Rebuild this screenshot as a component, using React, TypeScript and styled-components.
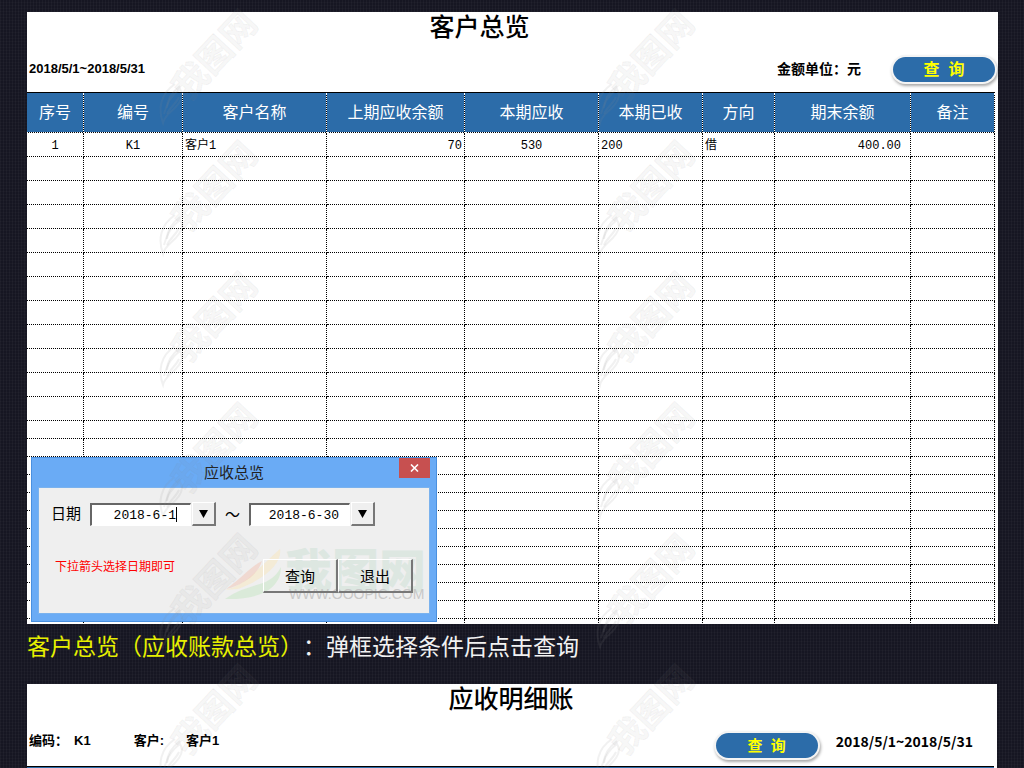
import React from 'react';
import styled, { createGlobalStyle } from 'styled-components';

const GlobalStyle = createGlobalStyle`
  *, *::before, *::after { box-sizing: border-box; }
  body {
    margin: 0;
    background: #161622;
    color: #000;
    font-family: "Liberation Sans", "Noto Sans CJK SC", sans-serif;
    font-size: 12px;
    text-spacing-trim: space-all;
  }
  button, input { font: inherit; margin: 0; }
`;

const Page = styled.main`
  position: relative;
  height: 100vh;
  overflow: hidden;
  padding: 12px 26px 0 27px;
  background-color: #161622;
  background-image:
    repeating-linear-gradient(90deg, rgba(255, 255, 255, 0.03) 0 1px, transparent 1px 3px),
    repeating-linear-gradient(0deg, rgba(255, 255, 255, 0.02) 0 1px, transparent 1px 3px);
`;

const Sheet = styled.section<{ $inset?: number }>`
  position: relative;
  margin-right: ${p => p.$inset ?? 0}px;
  background: #fff;
`;

const OverviewSheet = styled(Sheet)`
  height: 612px;
  overflow: hidden;
`;

const SheetTitle = styled.h1<{ $shift: number }>`
  margin: 0;
  padding-right: ${p => p.$shift}px;
  height: 32px;
  text-align: center;
  font-family: "Liberation Serif", "Noto Sans CJK SC", serif;
  font-size: 25px;
  font-weight: 500;
  line-height: 32px;
`;

const InfoBar = styled.div<{ $pad: string; $height: number }>`
  display: flex;
  align-items: center;
  height: ${p => p.$height}px;
  padding: ${p => p.$pad};
`;

const Label = styled.span<{ $size?: number; $gap?: number; $wide?: boolean }>`
  margin-right: ${p => p.$gap ?? 0}px;
  font-family: ${p => (p.$wide ? '' : '"Liberation Sans", ')}"Noto Sans CJK SC", sans-serif;
  font-size: ${p => p.$size ?? 13}px;
  font-weight: 700;
  line-height: 18px;
  white-space: nowrap;
`;

const Spacer = styled.span`
  flex: 1;
`;

const QueryPill = styled.button<{ $size: number; $drop?: number; $gap?: number }>`
  width: 102px;
  height: 25px;
  margin-top: ${p => p.$drop ?? 0}px;
  margin-right: ${p => p.$gap ?? 0}px;
  padding: 0;
  border: 0;
  border-radius: 13px;
  background: #2c6ca9;
  box-shadow: 0 0 0 2px #f4f4f4, 1px 2px 3px 2px #aaa;
  color: #ff0;
  font-size: ${p => p.$size}px;
  font-weight: 700;
  line-height: 25px;
`;

const Table = styled.table`
  width: calc(100% - 3px);
  table-layout: fixed;
  border-collapse: separate;
  border-spacing: 0;
  border-top: 1px solid #000;
`;

const HeadRow = styled.tr`
  background: #000;
`;

const HeadCell = styled.th`
  height: 40px;
  padding: 0;
  border-right: 1px dotted #fff;
  border-bottom: 1px dotted #fff;
  background: #2c6ca9;
  background-clip: padding-box;
  color: #fff;
  font-size: 16px;
  font-weight: 400;
  line-height: 24px;
  white-space: nowrap;
`;

const Cell = styled.td<{ $align?: string; $height: number; $pad?: number }>`
  height: ${p => p.$height}px;
  padding: 4px ${p => p.$pad ?? 2}px 0;
  border-right: 1px dotted #000;
  border-bottom: 1px dotted #000;
  font-family: "Liberation Mono", "Noto Sans CJK SC", monospace;
  font-size: 12px;
  line-height: 15px;
  text-align: ${p => p.$align ?? 'left'};
`;

const Dialog = styled.section`
  position: absolute;
  left: 4px;
  bottom: 2px;
  width: 406px;
  height: 165px;
  padding: 0 6px 7px;
  border: 1px solid #4a90e0;
  background: #6aabf5;
`;

const DialogBar = styled.header`
  display: flex;
  align-items: center;
  justify-content: center;
  height: 29px;
  color: #222;
`;

const DialogTitle = styled.h2`
  margin: 0;
  font-size: 15px;
  font-weight: 400;
  line-height: 29px;
`;

const CloseButton = styled.button`
  position: absolute;
  top: 0;
  right: 6px;
  display: grid;
  place-items: center;
  width: 31px;
  height: 20px;
  padding: 0;
  border: 0;
  background: #c75050;
`;

const DialogBody = styled.form`
  position: relative;
  height: 127px;
  padding: 13px 16px 20px 12px;
  border: 1px solid #7ab2ee;
  background: #efefef;
`;

const DateRow = styled.div`
  display: flex;
  align-items: center;
  height: 26px;
`;

const DateLabel = styled.label`
  width: 39px;
  font-size: 15px;
  line-height: 24px;
`;

const DateInput = styled.input<{ $active?: boolean }>`
  width: 101px;
  height: 23px;
  margin-right: 1px;
  padding: 2px ${p => (p.$active ? 14 : 10)}px 0 4px;
  border: 1px solid #fff;
  border-top: 2px solid #666;
  border-left: 2px solid #666;
  border-radius: 0;
  background: ${p => (p.$active
    ? '#fff linear-gradient(#000, #000) right 13px center / 1px 15px no-repeat'
    : '#fff')};
  font-family: "Liberation Mono", monospace;
  font-size: 13px;
  text-align: right;
`;

const DropButton = styled.button`
  display: grid;
  place-items: center;
  width: 24px;
  height: 24px;
  padding: 0;
  border: 1px solid #fff;
  border-right: 2px solid #777;
  border-bottom: 2px solid #777;
  background: #efefef;
`;

const Tilde = styled.span`
  width: 33px;
  font-family: "Noto Sans CJK SC", sans-serif;
  font-size: 15px;
  line-height: 24px;
  text-align: center;
`;

const ActionRow = styled.div`
  display: flex;
  align-items: flex-start;
  justify-content: space-between;
  margin-top: 32px;
  padding-left: 4px;
`;

const Hint = styled.p`
  margin: 0;
  color: #f00;
  font-size: 12px;
  line-height: 16px;
`;

const Actions = styled.div`
  position: relative;
  display: flex;
`;

const ActionButton = styled.button`
  width: 75px;
  height: 34px;
  padding: 0;
  border: 1px solid #fff;
  border-right: 2px solid #777;
  border-bottom: 2px solid #777;
  background: transparent;
  font-size: 15px;
`;

const Caption = styled.p`
  margin: 0;
  height: 60px;
  color: #f2f2f2;
  font-family: "Noto Sans CJK SC", sans-serif;
  font-size: 23px;
  font-weight: 400;
  line-height: 43px;
  white-space: nowrap;
`;

const CaptionName = styled.span`
  color: #e6f000;
`;

const LedgerEdge = styled.div`
  height: 20px;
  margin-right: 3px;
  border-top: 1px solid #000;
  background: #2c6ca9;
`;

const Brand = styled.svg`
  position: absolute;
  right: 0;
  bottom: 8px;
  width: 206px;
  height: 60px;
  overflow: visible;
  pointer-events: none;
`;

const MarkLayer = styled.div`
  position: absolute;
  top: 4px;
  left: 155px;
  right: 0;
  display: grid;
  grid-template-columns: repeat(2, 437px);
  grid-auto-rows: 131px;
  pointer-events: none;
`;

const Mark = styled.svg`
  width: 112px;
  height: 131px;
  overflow: visible;
`;

const columns = [
  { name: '序号', width: 57 },
  { name: '编号', width: 99 },
  { name: '客户名称', width: 144 },
  { name: '上期应收余额', width: 138 },
  { name: '本期应收', width: 134 },
  { name: '本期已收', width: 104 },
  { name: '方向', width: 72 },
  { name: '期末余额', width: 136 },
  { name: '备注', width: 84 },
];

const record = [
  { text: '1', align: 'center' },
  { text: 'K1', align: 'center' },
  { text: '客户1', align: 'left' },
  { text: '70', align: 'right' },
  { text: '530', align: 'center' },
  { text: '200', align: 'left' },
  { text: '借', align: 'left' },
  { text: '400.00', align: 'right', pad: 9 },
  { text: '', align: 'left' },
];

const emptyRows = [...Array(11).fill(24), ...Array(12).fill(18)];

function DownArrow() {
  return (
    <svg width="9" height="8" viewBox="0 0 9 8" aria-hidden="true">
      <path d="M0 0h9L4.500 8z" fill="#000" />
    </svg>
  );
}

function Watermark() {
  return (
    <Mark viewBox="0 0 112 131" aria-hidden="true">
      <g fill="none" stroke="#888" strokeOpacity="0.12" strokeWidth="2">
        <path d="M20 80C5 90 3 105 8 119c2-9 10-11 16-20 4-6 3-11 1-14-7 5-13 13-16 25" />
        <path d="M12 104c0-9 5-16 13-22M12 110c3-7 9-10 12-17" />
      </g>
      <text
        transform="translate(33 98) rotate(-47)"
        fontFamily="Noto Sans CJK SC, sans-serif"
        fontSize="35"
        fontWeight="700"
        fill="#888"
        fillOpacity="0.06"
        stroke="#888"
        strokeOpacity="0.09"
      >
        我图网
      </text>
    </Mark>
  );
}

function DateField({ id, label, value, active }: { id: string; label: string; value: string; active?: boolean }) {
  return (
    <>
      <DateInput id={id} aria-label={label} defaultValue={value} $active={active} />
      <DropButton type="button" aria-label={`选择${label}`}>
        <DownArrow />
      </DropButton>
    </>
  );
}

function QueryDialog() {
  return (
    <Dialog role="dialog" aria-labelledby="dialog-title">
      <DialogBar>
        <DialogTitle id="dialog-title">应收总览</DialogTitle>
        <CloseButton type="button" aria-label="关闭">
          <svg width="9" height="8" viewBox="0 0 9 8" aria-hidden="true">
            <path d="M1 0.500l7 7M8 0.500l-7 7" stroke="#fff" strokeWidth="1.600" />
          </svg>
        </CloseButton>
      </DialogBar>
      <DialogBody>
        <Brand viewBox="0 0 206 60" aria-hidden="true">
          <path d="M0 45C22 42 36 22 57 4c2 12-10 28-42 40z" fill="#f7e8c4" fillOpacity="0.600" />
          <path d="M3 44C18 34 28 21 39 16c-4 13-17 23-36 28z" fill="#f2c4b4" fillOpacity="0.500" />
          <path d="M2 54c25-18 45-10 56-32 0 22-22 33-56 32z" fill="#d2e8d0" fillOpacity="0.700" />
          <text x="62" y="43" fontFamily="Noto Sans CJK SC, sans-serif" fontSize="47" fontWeight="900" fill="#d5e4dc" fillOpacity="0.700">我图网</text>
          <text x="66" y="54" fontFamily="Liberation Sans, sans-serif" fontSize="14" fill="#c8c8c8">WWW.OOOPIC.COM</text>
        </Brand>
        <DateRow>
          <DateLabel htmlFor="date-from">日期</DateLabel>
          <DateField id="date-from" label="开始日期" value="2018-6-1" active />
          <Tilde>～</Tilde>
          <DateField id="date-to" label="结束日期" value="2018-6-30" />
        </DateRow>
        <ActionRow>
          <Hint>下拉箭头选择日期即可</Hint>
          <Actions>
            <ActionButton type="button">查询</ActionButton>
            <ActionButton type="button">退出</ActionButton>
          </Actions>
        </ActionRow>
      </DialogBody>
    </Dialog>
  );
}

export default function App() {
  return (
    <>
      <GlobalStyle />
      <Page>
        <OverviewSheet>
          <SheetTitle $shift={66}>客户总览</SheetTitle>
          <InfoBar $height={48} $pad="2px 3px 0 2px">
            <Label>2018/5/1~2018/5/31</Label>
            <Spacer />
            <Label $size={14} $gap={32}>金额单位：元</Label>
            <QueryPill type="button" $size={16}>查{'\u00a0\u00a0'}询</QueryPill>
          </InfoBar>
          <Table>
            <colgroup>
              {columns.map(c => <col key={c.name} width={c.width} />)}
            </colgroup>
            <thead>
              <HeadRow>{columns.map(c => <HeadCell key={c.name} scope="col">{c.name}</HeadCell>)}</HeadRow>
            </thead>
            <tbody>
              <tr>
                {record.map((c, i) => (
                  <Cell key={i} $height={24} $align={c.align} $pad={c.pad}>{c.text}</Cell>
                ))}
              </tr>
              {emptyRows.map((h, r) => (
                <tr key={r}>
                  {columns.map(c => <Cell key={c.name} $height={h} />)}
                </tr>
              ))}
            </tbody>
          </Table>
          <QueryDialog />
        </OverviewSheet>
        <Caption>
          <CaptionName>客户总览（应收账款总览）</CaptionName>：弹框选择条件后点击查询
        </Caption>
        <Sheet $inset={1}>
          <SheetTitle $shift={2}>应收明细账</SheetTitle>
          <InfoBar $height={50} $pad="0 24px 0 2px">
            <Label $gap={6}>编码：</Label>
            <Label $gap={43}>K1</Label>
            <Label $gap={22}>客户:</Label>
            <Label>客户1</Label>
            <Spacer />
            <QueryPill type="button" $size={15} $drop={8} $gap={18}>查{'\u00a0\u00a0'}询</QueryPill>
            <Label $wide $size={14}>2018/5/1~2018/5/31</Label>
          </InfoBar>
          <LedgerEdge />
        </Sheet>
        <MarkLayer>
          {Array.from({ length: 12 }, (_, i) => <Watermark key={i} />)}
        </MarkLayer>
      </Page>
    </>
  );
}
